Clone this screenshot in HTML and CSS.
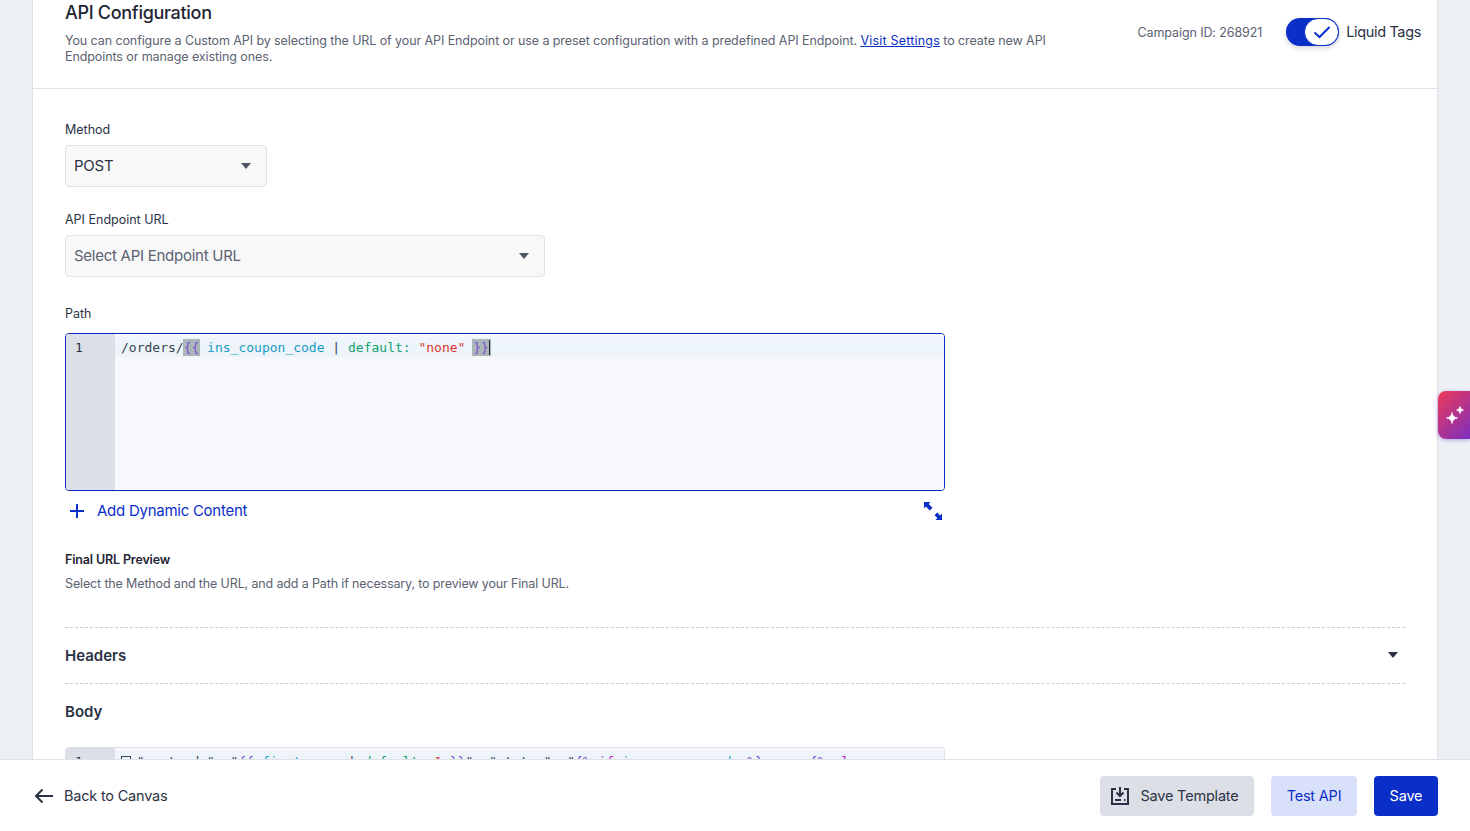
FILE: index.html
```html
<!DOCTYPE html>
<html lang="en">
<head>
    <meta charset="UTF-8">
    <title>API Configuration</title>
    <link rel="stylesheet" href="styles.css">
</head>
<body>
    <div id="panel">
        <div class="head">
            <div class="head-text">
                <h1>API Configuration</h1>
                <p>You can configure a Custom API by selecting the URL of your API Endpoint or use a preset configuration with a predefined API Endpoint. <a href="#">Visit Settings</a> to create new API Endpoints or manage existing ones.</p>
            </div>
            <div class="head-right">
                <span class="camp-id">Campaign ID: 268921</span>
                <span class="toggle">
                    <span class="knob">
                        <svg width="18" height="14" viewBox="0 0 18 14"><path d="M1.5 7.5L6.5 12L16.5 2" fill="none" stroke="#0a2fc9" stroke-width="2"/></svg>
                    </span>
                </span>
                <span class="liquid">Liquid Tags</span>
            </div>
        </div>

        <div class="form">
            <label class="lbl">Method</label>
            <div class="select select-sm"><span class="val">POST</span><i class="caret"></i></div>

            <label class="lbl lbl-2">API Endpoint URL</label>
            <div class="select select-lg"><span class="val placeholder">Select API Endpoint URL</span><i class="caret"></i></div>

            <label class="lbl lbl-3">Path</label>
            <div class="editor">
                <div class="gutter">1</div>
                <div class="code">
                    <div class="line"><span class="c-plain">/orders/</span><span class="c-brace c-match">{{</span> <span class="c-var">ins_coupon_code</span> <span class="c-plain">|</span> <span class="c-filter">default:</span> <span class="c-str">"none"</span> <span class="c-brace c-match c-match-end">}}</span></div>
                </div>
            </div>

            <div class="editor-foot">
                <a class="add-link" href="#">
                    <svg width="14" height="14" viewBox="0 0 14 14"><path d="M7 0V14M0 7H14" stroke="#0a2fc9" stroke-width="2"/></svg>
                    Add Dynamic Content
                </a>
                <svg class="expand" width="20" height="20" viewBox="0 0 20 20"><path d="M1 1H7.5L5.6 2.9L9.5 6.8L6.8 9.5L2.9 5.6L1 7.5Z M19 19H12.5L14.4 17.1L11.5 14.2L14.2 11.5L17.1 14.4L19 12.5Z" fill="#0a2fc9"/></svg>
            </div>

            <h4>Final URL Preview</h4>
            <p class="hint">Select the Method and the URL, and add a Path if necessary, to preview your Final URL.</p>
        </div>

        <div class="section sec-headers"><span>Headers</span><i class="caret caret-dark"></i></div>
        <div class="section sec-body"><span>Body</span></div>

        <div class="editor editor-body">
            <div class="gutter">1</div>
            <div class="code">
                <div class="line"><span class="fold"></span> <span class="c-plain">"postcode": "</span><span class="c-brace">{{</span> <span class="c-var">first_name</span> <span class="c-plain">|</span> <span class="c-filter">default:</span> <span class="c-str">1</span> <span class="c-brace">}}</span><span class="c-plain">", "status": "</span><span class="c-brace">{%</span> <span class="c-tag">if</span> <span class="c-var">ins_coupon_code</span> <span class="c-brace">%}</span> <span class="c-plain">none</span> <span class="c-brace">{%</span> <span class="c-tag">else</span></div>
            </div>
        </div>
    </div>

    <div class="ai-tab">
        <svg width="20" height="20" viewBox="0 0 20 20"><path d="M7 7.5Q7.6 12.4 12.5 13Q7.6 13.6 7 18.5Q6.4 13.6 1.5 13Q6.4 12.4 7 7.5Z M15 1.5Q15.4 4.6 18.5 5Q15.4 5.4 15 8.5Q14.6 5.4 11.5 5Q14.6 4.6 15 1.5Z" fill="#fff" stroke="#fff" stroke-width=".8"/></svg>
    </div>

    <div id="footer">
        <a class="back" href="#">
            <svg width="20" height="16" viewBox="0 0 20 16"><path d="M19 8H2M8.5 1.5L2 8L8.5 14.5" fill="none" stroke="#2b3245" stroke-width="2"/></svg>
            Back to Canvas
        </a>
        <div class="actions">
            <button class="btn btn-grey">
                <svg width="20" height="20" viewBox="0 0 20 20"><path d="M6 3H2V18H18V3H14" fill="none" stroke="#2b3245" stroke-width="2"/><path d="M10 1V9M6.5 6.5L10 10L13.5 6.5" fill="none" stroke="#2b3245" stroke-width="2"/><path d="M5 14H11M14 14H15.5" stroke="#2b3245" stroke-width="2"/></svg>
                Save Template
            </button>
            <button class="btn btn-light">Test API</button>
            <button class="btn btn-blue">Save</button>
        </div>
    </div>
</body>
</html>
```

FILE: styles.css
```css
*{
    box-sizing: border-box;
}
html,body{
    margin: 0;
    padding: 0;
    height: 831px;
    overflow: hidden;
}
body{
    font: 400 12.5px/16px Inter, "Liberation Sans", sans-serif;
    color: #2b3245;
    background-color: #edf1f5;
}
a{
    text-decoration: none;
}
h1,h4,p{
    margin: 0;
}
#panel{
    width: 1406px;
    height: 831px;
    margin-left: 32px;
    background-color: #fff;
    border-left: 1px solid #dfe1e6;
    border-right: 1px solid #dfe1e6;
    overflow: hidden;
}
.head{
    display: flex;
    justify-content: space-between;
    height: 89px;
    padding: 0 16px 0 32px;
    border-bottom: 1px solid #dfe1e6;
}
.head-text{
    width: 990px;
}
.head h1{
    font-size: 18px;
    font-weight: 500;
    letter-spacing: -.3px;
    line-height: 24px;
    padding-top: 1px;
    margin-bottom: 8px;
    color: #1f2535;
}
.head p{
    color: #5b6271;
    letter-spacing: -.09px;
}
.head p a{
    color: #0a2fc9;
    letter-spacing: .2px;
    text-decoration: underline;
}
.head-right{
    display: flex;
    align-items: center;
    height: 64px;
}
.camp-id{
    color: #5b6271;
    letter-spacing: -.1px;
    margin: 2px 24px 0 0;
}
.toggle{
    display: flex;
    justify-content: flex-end;
    width: 53px;
    height: 28px;
    border-radius: 14px;
    background-color: #0a2fc9;
    margin-right: 7px;
    box-shadow: 0 2px 5px rgba(20,30,60,.2);
}
.knob{
    display: flex;
    align-items: center;
    justify-content: center;
    width: 35px;
    height: 28px;
    border: 1px solid #0a2fc9;
    border-radius: 14px;
    background-color: #fff;
}
.liquid{
    font-size: 14.5px;
    letter-spacing: -.35px;
}
.form{
    padding: 33px 32px 0;
}
.lbl{
    display: block;
    height: 16px;
    margin-bottom: 7px;
}
.lbl-2{
    margin-top: 25px;
}
.lbl-3{
    margin-top: 29px;
    margin-bottom: 11px;
}
.select{
    display: flex;
    align-items: center;
    justify-content: space-between;
    height: 42px;
    padding: 0 15px 0 8px;
    background-color: #f8f8f9;
    border: 1px solid #dfe1e6;
    border-radius: 4px;
    font-size: 15px;
    letter-spacing: -.26px;
}
.select-sm{
    width: 202px;
}
.select-lg{
    width: 480px;
}
.placeholder{
    color: #5b6271;
}
.caret{
    width: 0;
    height: 0;
    border-left: 5.5px solid transparent;
    border-right: 5.5px solid transparent;
    border-top: 6px solid #4e5564;
}
.caret-dark{
    margin-bottom: 2px;
    border-top-color: #2b3245;
}
.editor{
    display: flex;
    width: 880px;
    height: 158px;
    border: 1px solid #0a2fc9;
    border-radius: 4px;
    overflow: hidden;
    font: 13px/20px "DejaVu Sans Mono", monospace;
}
.gutter{
    width: 49px;
    padding: 4px 0 0 9px;
    background-color: #dcdfe6;
    color: #2b3245;
}
.code{
    flex: 1;
    padding-top: 3px;
    background-color: #f6f8fb;
}
.line{
    height: 20px;
    padding: 1px 0 0 6px;
    line-height: 20px;
    background-color: #edf5fa;
    white-space: pre;
}
.c-plain{
    color: #3b4252;
}
.c-brace{
    color: #7a4fd6;
}
.c-match{
    background-color: #aab5b8;
    box-shadow: 0 0 0 1px #aab5b8;
}
.c-match-end{
    border-right: 1px solid #1f2535;
}
.c-var{
    color: #1a9bc4;
}
.c-filter{
    color: #12a06e;
}
.c-str{
    color: #e0332f;
}
.c-tag{
    color: #c026d3;
}
.editor-foot{
    display: flex;
    justify-content: space-between;
    width: 880px;
    padding: 10px 2px 0 5px;
}
.add-link{
    display: flex;
    align-items: center;
    gap: 13px;
    height: 20px;
    font-size: 15px;
    letter-spacing: -.26px;
    color: #0a2fc9;
}
.form h4{
    margin-top: 31px;
    font-size: 12.5px;
    font-weight: 600;
    letter-spacing: -.15px;
    color: #1f2535;
}
.hint{
    margin-top: 8px;
    color: #5b6271;
    letter-spacing: -.14px;
}
.section{
    display: flex;
    align-items: center;
    justify-content: space-between;
    height: 56px;
    margin: 0 32px;
    padding-right: 7px;
    font-size: 15px;
    font-weight: 600;
}
.sec-headers{
    margin-top: 35px;
    border-top: 1px dashed #c9ccd3;
    border-bottom: 1px dashed #c9ccd3;
    height: 57px;
}
.editor-body{
    margin: 7px 0 0 32px;
    border-color: #dcdfe6;
}
.fold{
    display: inline-block;
    width: 10px;
    height: 10px;
    margin-right: -2.17px;
    border: 1px solid #3b4252;
}
.ai-tab{
    position: fixed;
    top: 391px;
    right: 0;
    display: flex;
    align-items: center;
    width: 32px;
    height: 48px;
    padding-left: 7px;
    border-radius: 8px 0 0 8px;
    background: linear-gradient(135deg, #ef3a56, #7b2fc0);
    box-shadow: 0 1px 4px rgba(90,40,200,.4);
}
#footer{
    position: fixed;
    left: 0;
    right: 0;
    bottom: 0;
    display: flex;
    align-items: center;
    justify-content: space-between;
    height: 72px;
    padding: 0 32px 0 34px;
    background-color: #fff;
    border-top: 1px solid #dfe1e6;
}
.back{
    display: flex;
    align-items: center;
    gap: 10px;
    font-size: 14.5px;
    letter-spacing: -.2px;
    color: #2b3245;
}
.actions{
    display: flex;
    gap: 17px;
}
.btn{
    display: flex;
    align-items: center;
    justify-content: center;
    gap: 10px;
    height: 40px;
    border: 0;
    border-radius: 4px;
    font: 14.5px/20px Inter, "Liberation Sans", sans-serif;
    letter-spacing: -.2px;
}
.btn-grey{
    width: 154px;
    padding: 0 5px 0 0;
    background-color: #dcdfe6;
    color: #2b3245;
}
.btn-light{
    width: 86px;
    background-color: #d9e1fa;
    color: #0a2fc9;
}
.btn-blue{
    width: 64px;
    background-color: #0a2fc9;
    color: #fff;
}
```
